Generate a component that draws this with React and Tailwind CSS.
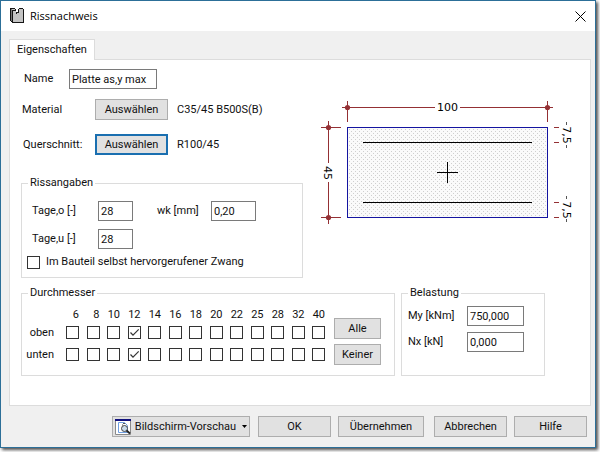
import { useState } from "react";

const sizes = [6, 8, 10, 12, 14, 16, 18, 20, 22, 25, 28, 32, 40];

function Button({ className = "", border = "border border-[#adadad]", children, ...props }) {
  return (
    <button className={`h-[21px] bg-[#e1e1e1] flex items-center justify-center whitespace-nowrap ${border} ${className}`} {...props}>
      {children}
    </button>
  );
}

function Field({ className = "", ...props }) {
  return <input type="text" className={`h-5 border border-[#7a7a7a] bg-white px-[2px] outline-none ${className}`} {...props} />;
}

function Check(props) {
  return (
    <span className="relative block w-[13px] h-[13px] shrink-0">
      <input type="checkbox" className="peer block appearance-none w-[13px] h-[13px] border border-[#333] bg-white" {...props} />
      <svg viewBox="0 0 13 13" className="hidden peer-checked:block absolute inset-0 w-[13px] h-[13px] pointer-events-none" fill="none" stroke="#333">
        <path d="M2.5 6.5 5 9.2 10.7 3.4" strokeWidth="1.2" />
      </svg>
    </span>
  );
}

function Group({ title, className = "", children }) {
  return (
    <fieldset className={`border border-[#dcdcdc] min-w-0 ${className}`}>
      <legend className="ml-[6px] px-[2px] h-4 leading-4">{title}</legend>
      {children}
    </fieldset>
  );
}

function AppIcon() {
  return (
    <svg width="14" height="16" viewBox="0 0 14 16" shapeRendering="crispEdges">
      <path d="M1 1h12v14H3v-1H1z" fill="#c3c3c3" />
      <path d="M6 0h3v4H6z" fill="#fff" />
      <path d="M0 0h5v1H0zM0 1h1v12H0zM1 13h2v1H1zM2 2h1v13H2zM2 14h12v1H2zM13 1h1v14h-1zM9 0h4v1H9zM5 1h1v2H5zM8 1h1v4H8zM6 4h2v1H6zM6 5h1v1H6zM3 2h2v1H3z" fill="#151515" />
      <path d="M1 1h1v12H1z" fill="#777" />
    </svg>
  );
}

function PreviewIcon() {
  return (
    <svg width="16" height="16" viewBox="0 0 16 16" className="shrink-0">
      <path d="M.5.5h15v15H.5z" fill="#fff" stroke="#8a8a8a" />
      <path d="M0 0h16v2H0z" fill="#10107c" />
      <path d="M3.5 3.5h6l3 3v7h-9z" fill="#fff" stroke="#6f9fe0" />
      <path d="M8 4.5h2M7 6h1" stroke="#555" />
      <circle cx="9.5" cy="9.5" r="3" fill="#c9dcec" stroke="#444" />
      <path d="M11.5 11.5l3.5 3" stroke="#222" strokeWidth="2" />
    </svg>
  );
}

function SectionDrawing() {
  return (
    <svg width="262" height="126" viewBox="0 0 262 126" className="block shrink-0" fontFamily="'DejaVu Sans', sans-serif" fontSize="11" shapeRendering="crispEdges">
      <defs>
        <pattern id="dots" width="4" height="4" patternUnits="userSpaceOnUse">
          <rect width="1" height="1" fill="#cfcfcf" />
          <rect x="2" y="2" width="1" height="1" fill="#cfcfcf" />
        </pattern>
      </defs>
      {/* Querschnitt */}
      <rect x="32.5" y="28.5" width="200" height="90" fill="#fafafa" />
      <rect x="32.5" y="28.5" width="200" height="90" fill="url(#dots)" />
      <path d="M32.5 28.5h200v90h-200z" fill="none" stroke="#1414a0" />
      <path d="M48 43.5h169M48 103.5h169M122 73.5h21M132.5 63v21" stroke="#000" />
      {/* Bemaßung */}
      <g stroke="#943034" fill="none">
        <path d="M27 8.5H120M145 8.5H238M32.5 2v21M232.5 2v21" />
        <path d="M13.5 22V64M13.5 83V125M6 28.5h20M6 118.5h20" />
        <path d="M239 28.5h5M239 43.5h5M239 103.5h5M239 118.5h5" />
        <path d="M251.5 23v3M251.5 46v3M251.5 97v3M251.5 120v3" stroke="#555" />
      </g>
      <g fill="#943034" shapeRendering="auto">
        <circle cx="32.5" cy="8.5" r="2.6" />
        <circle cx="232.5" cy="8.5" r="2.6" />
        <circle cx="13.5" cy="28.5" r="2.6" />
        <circle cx="13.5" cy="118.5" r="2.6" />
      </g>
      <g fill="#000" textAnchor="middle">
        <text x="132.5" y="12">100</text>
        <text transform="translate(9 74) rotate(90)">45</text>
        <text transform="translate(248 36) rotate(90)">7,5</text>
        <text transform="translate(248 111) rotate(90)">7,5</text>
      </g>
    </svg>
  );
}

export default function App() {
  const [top, setTop] = useState([12]);
  const [bottom, setBottom] = useState([12]);
  const toggle = (list, n) => (list.includes(n) ? list.filter(x => x !== n) : [...list, n]);
  const rows = [
    { name: "oben", list: top, set: setTop },
    { name: "unten", list: bottom, set: setBottom },
  ];

  return (
    <div className="pr-1 pb-1 bg-white overflow-hidden text-[11px] leading-4 text-[#111]" style={{ fontFamily: "Roboto, 'Liberation Sans', sans-serif" }}>
      <div className="border border-[#2c6f98] bg-[#f0f0f0] shadow-[2px_2px_3px_#000000b0]">
        {/* Titelleiste */}
        <header className="h-[30px] bg-white flex items-center px-[9px]">
          <AppIcon />
          <h1 className="ml-[6px] flex-1 text-[11px] text-black" style={{ fontFamily: "'Open Sans', 'Noto Sans', sans-serif" }}>Rissnachweis</h1>
          <button aria-label="Schließen" className="w-[11px] h-[11px]">
            <svg width="11" height="11" viewBox="0 0 11 11" stroke="#000"><path d="M.5.5l10 10M10.5.5l-10 10" /></svg>
          </button>
        </header>

        <div className="pl-2 pr-1 pt-2">
          <div role="tablist" className="flex">
            <button role="tab" aria-selected="true" className="relative z-10 -mb-px h-[21px] px-[7px] border border-b-0 border-[#dcdcdc] bg-white">Eigenschaften</button>
          </div>

          {/* Eigenschaften */}
          <main className="border border-[#dcdcdc] bg-white pl-[11px] pt-[9px] pb-[29px]">
            <div className="flex justify-between pr-[13px]">
              <div className="w-[282px] shrink-0">
                <div className="flex items-center">
                  <label htmlFor="name" className="w-12 pl-[3px]">Name</label>
                  <Field id="name" className="w-[88px]" defaultValue="Platte as,y max" />
                </div>
                <div className="flex items-center mt-[10px]">
                  <span className="w-[74px] pl-px">Material</span>
                  <Button className="w-[73px] mr-[9px]">Auswählen</Button>
                  C35/45 B500S(B)
                </div>
                <div className="flex items-center mt-[14px]">
                  <span className="w-[74px] pl-[2px]">Querschnitt:</span>
                  <Button className="w-[73px] mr-[9px]" border="border-2 border-[#1a6fb0]">Auswählen</Button>
                  R100/45
                </div>

                <Group title="Rissangaben" className="mt-5 pb-[7px]">
                  <div className="flex items-center pl-[10px] mt-[10px]">
                    <label htmlFor="tageo" className="w-[66px]">Tage,o [-]</label>
                    <Field id="tageo" className="w-[35px]" defaultValue="28" />
                    <label htmlFor="wk" className="ml-6 w-[54px]">wk [mm]</label>
                    <Field id="wk" className="w-[45px]" defaultValue="0,20" />
                  </div>
                  <div className="flex items-center pl-[10px] mt-2">
                    <label htmlFor="tageu" className="w-[66px]">Tage,u [-]</label>
                    <Field id="tageu" className="w-[35px]" defaultValue="28" />
                  </div>
                  <label className="flex items-center gap-[6px] pl-[5px] mt-[5px]">
                    <Check />
                    Im Bauteil selbst hervorgerufener Zwang
                  </label>
                </Group>
              </div>
              <div className="pt-[30px]">
                <SectionDrawing />
              </div>
            </div>

            <div className="flex gap-[6px] mt-[7px]">
              <Group title="Durchmesser" className="w-[374px] pb-[5px]">
                <div className="flex">
                  <div className="w-[44px] mt-6 pr-3 text-right">
                    <div className="h-[22px]">oben</div>
                    <div>unten</div>
                  </div>
                  <div className="w-[259px] mt-[6px]">
                    <div className="flex justify-between mb-[3px]">
                      {sizes.map(n => <span key={n} className="w-[13px] flex justify-end">{n}</span>)}
                    </div>
                    {rows.map(r => (
                      <div key={r.name} className="flex justify-between h-[13px] mb-[9px]">
                        {sizes.map(n => (
                          <Check key={n} aria-label={`${r.name} ${n}`} checked={r.list.includes(n)} onChange={() => r.set(toggle(r.list, n))} />
                        ))}
                      </div>
                    ))}
                  </div>
                  <div className="ml-[9px] mt-[17px] flex flex-col gap-[5px]">
                    <Button className="w-[47px]" onClick={() => { setTop(sizes); setBottom(sizes); }}>Alle</Button>
                    <Button className="w-[47px]" onClick={() => { setTop([]); setBottom([]); }}>Keiner</Button>
                  </div>
                </div>
              </Group>
              <Group title="Belastung" className="w-[144px]">
                <div className="flex items-center pl-[6px] mt-[5px]">
                  <label htmlFor="my" className="w-[59px]">My [kNm]</label>
                  <Field id="my" className="w-[57px]" defaultValue="750,000" />
                </div>
                <div className="flex items-center pl-[6px] mt-[6px]">
                  <label htmlFor="nx" className="w-[59px]">Nx [kN]</label>
                  <Field id="nx" className="w-[57px]" defaultValue="0,000" />
                </div>
              </Group>
            </div>
          </main>
        </div>

        <footer className="flex justify-end pr-2 pt-[10px] pb-[10px]">
          <Button className="w-[138px] mr-2">
            <PreviewIcon />
            <span className="ml-1 mr-[6px]">Bildschirm-Vorschau</span>
            <svg width="5" height="3" viewBox="0 0 5 3" className="shrink-0"><path d="M0 0h5L2.5 3z" /></svg>
          </Button>
          <Button className="w-[73px] mr-[7px]">OK</Button>
          <Button className="w-[86px] mr-[10px]">Übernehmen</Button>
          <Button className="w-[73px] mr-[7px]">Abbrechen</Button>
          <Button className="w-[73px]">Hilfe</Button>
        </footer>
      </div>
    </div>
  );
}
